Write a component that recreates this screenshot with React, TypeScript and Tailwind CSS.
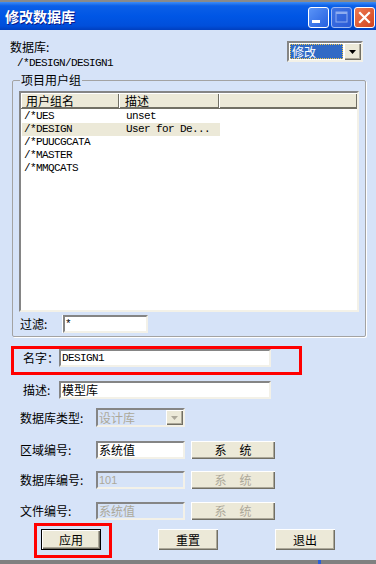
import React from "react";

type Group = { name: string; desc: string; selected?: boolean };

const GROUPS: Group[] = [
  { name: "/*UES", desc: "unset" },
  { name: "/*DESIGN", desc: "User for De...", selected: true },
  { name: "/*PUUCGCATA", desc: "" },
  { name: "/*MASTER", desc: "" },
  { name: "/*MMQCATS", desc: "" },
];

const sunken =
  "border-2 border-t-[#858585] border-l-[#858585] border-b-[#f3f1e8] border-r-[#f3f1e8]";
const raised =
  "bg-[#ece9d8] shadow-[inset_1px_1px_0_#ffffff,inset_-1px_-1px_0_#716f64,inset_-2px_-2px_0_#aca899]";
const mono = "font-['Liberation_Mono',monospace] text-[11px] tracking-[-0.6px]";
const header =
  "h-full bg-[#ece9d8] leading-[15px] shadow-[inset_1px_1px_0_#ffffff,inset_-1px_-1px_0_#716f64]";

function Arrow({ disabled = false }: { disabled?: boolean }) {
  return (
    <div className={`flex w-[17px] shrink-0 items-center justify-center ${raised}`}>
      <svg width="7" height="4" viewBox="0 0 7 4">
        <path d="M0 0h7L3.5 4z" fill={disabled ? "#aca899" : "#000"} />
      </svg>
    </div>
  );
}

function Label({ text, width }: { text: string; width: string }) {
  return <div className={`${width} shrink-0 leading-[18px]`}>{text}</div>;
}

function SysButton({ disabled = false }: { disabled?: boolean }) {
  return (
    <div
      className={`ml-[6px] flex h-[18px] w-[84px] items-center justify-center gap-[13px] leading-none ${raised} ${
        disabled ? "text-[#aca899]" : "text-black"
      }`}
    >
      <span>系</span>
      <span>统</span>
    </div>
  );
}

function TitleButtons() {
  return (
    <div className="mt-[2px] flex gap-[2px]">
      <div className="flex h-[21px] w-[21px] items-end rounded-[3px] border border-white bg-[linear-gradient(135deg,#5a94f7,#2560df)] pb-[4px] pl-[3px]">
        <div className="h-[3px] w-[8px] bg-white" />
      </div>
      <div className="flex h-[21px] w-[21px] items-center justify-center rounded-[3px] border border-[#9db8f2] bg-[linear-gradient(135deg,#3f73e4,#2a5ad6)]">
        <svg width="13" height="12" viewBox="0 0 13 12">
          <rect x="1" y="1" width="11" height="10" fill="none" stroke="#8eacef" strokeWidth="1" />
          <rect x="1" y="1" width="11" height="2" fill="#8eacef" />
        </svg>
      </div>
      <div className="flex h-[21px] w-[21px] items-center justify-center rounded-[3px] border border-white bg-[linear-gradient(135deg,#ee7a52,#d2441f)]">
        <svg width="13" height="13" viewBox="0 0 13 13">
          <path d="M2 2l9 9M11 2l-9 9" stroke="#fff" strokeWidth="2.2" strokeLinecap="square" />
        </svg>
      </div>
    </div>
  );
}

export default function App() {
  return (
    <div className="flex h-[564px] w-[376px] flex-col overflow-hidden bg-[#d6e3f8] font-['Noto_Sans_CJK_SC',sans-serif] text-[12px] text-black">
      <div className="flex h-[30px] shrink-0 items-center justify-between border-t-2 border-[#8a8a8a] bg-[linear-gradient(180deg,#3d8cf6_0%,#0b5fe7_14%,#0056e5_50%,#004fdb_85%,#003fbf_100%)] pl-[5px] pr-[1px]">
        <span className="text-[14px] font-bold leading-none text-white [text-shadow:1px_1px_0_#0a1c8c]">
          修改数据库
        </span>
        <TitleButtons />
      </div>

      <div className="flex flex-1 flex-col">
        <div className="flex justify-between pl-[10px] pr-[13px] pt-[10px]">
          <div className="flex flex-col">
            <span className="leading-[14px]">数据库:</span>
            <span className={`ml-[7px] mt-[2px] leading-[14px] ${mono}`}>/*DESIGN/DESIGN1</span>
          </div>
          <div className={`mt-[1px] flex h-[21px] w-[76px] bg-white ${sunken}`}>
            <div className="flex flex-1 p-[1px]">
              <div className="flex flex-1 items-center border border-dotted border-[#f2c84b] bg-[#316ac5] pl-[1px] leading-none text-white">
                修改
              </div>
            </div>
            <Arrow />
          </div>
        </div>

        <fieldset className="ml-[12px] mt-[3px] w-[354px] rounded-[2px] border border-[#a3a3a3] px-[6px] pb-[3px] shadow-[1px_1px_0_#ffffff]">
          <legend className="ml-[1px] px-[1px] leading-[14px]">项目用户组</legend>
          <div className={`mt-[4px] flex h-[221px] w-[340px] flex-col bg-white ${sunken}`}>
            <div className="flex h-[16px] shrink-0 border-b border-[#716f64]">
              <div className={`w-[98px] pl-[5px] ${header}`}>用户组名</div>
              <div className={`w-[100px] pl-[6px] ${header}`}>描述</div>
              <div className={`flex-1 ${header}`} />
            </div>
            <div className="pt-[1px]">
              {GROUPS.map((g) => (
                <div
                  key={g.name}
                  className={`ml-[1px] flex h-[13px] w-[198px] leading-[13px] ${mono} ${
                    g.selected ? "bg-[#ece9d8]" : ""
                  }`}
                >
                  <span className="w-[104px] pl-[2px]">{g.name}</span>
                  <span>{g.desc}</span>
                </div>
              ))}
            </div>
          </div>
          <div className="mt-[3px] flex items-center">
            <Label text="过滤:" width="w-[43px] pl-[1px]" />
            <div className={`h-[18px] w-[86px] bg-white pl-[1px] leading-[14px] ${mono}`}>
              <div className={`h-full ${sunken}`}>*</div>
            </div>
          </div>
        </fieldset>

        <div className="ml-[11px] mt-[9px] flex h-[29px] w-[291px] items-start border-[3px] border-[#ff0000] pl-[9px]">
          <Label text="名字：" width="w-[36px]" />
          <div className={`h-[18px] w-[212px] bg-white pl-[1px] leading-[14px] ${mono} ${sunken}`}>DESIGN1</div>
        </div>

        <div className="ml-[23px] mt-[6px] flex items-center">
          <Label text="描述:" width="w-[36px]" />
          <div className={`h-[18px] w-[212px] bg-white pl-[1px] leading-[14px] ${sunken}`}>模型库</div>
        </div>

        <div className="ml-[20px] mt-[9px] flex items-center">
          <Label text="数据库类型:" width="w-[76px]" />
          <div className={`flex h-[19px] w-[89px] ${sunken}`}>
            <div className="flex-1 pl-[1px] leading-[15px] text-[#aca899]">设计库</div>
            <Arrow disabled />
          </div>
        </div>

        <div className="ml-[20px] mt-[14px] flex items-center">
          <Label text="区域编号:" width="w-[76px]" />
          <div className={`h-[18px] w-[89px] bg-white pl-[1px] leading-[14px] ${sunken}`}>系统值</div>
          <SysButton />
        </div>

        <div className="ml-[20px] mt-[12px] flex items-center">
          <Label text="数据库编号:" width="w-[76px]" />
          <div
            className={`h-[18px] w-[89px] pl-[1px] font-['Liberation_Sans',sans-serif] text-[11px] leading-[14px] text-[#aca899] ${sunken}`}
          >
            101
          </div>
          <SysButton disabled />
        </div>

        <div className="ml-[20px] mt-[13px] flex items-center">
          <Label text="文件编号:" width="w-[76px]" />
          <div className={`h-[18px] w-[89px] pl-[1px] leading-[14px] text-[#aca899] ${sunken}`}>系统值</div>
          <SysButton disabled />
        </div>

        <div className="mt-[3px] flex items-start">
          <div className="ml-[34px] h-[35px] w-[78px] border-[3px] border-[#ff0000] pl-[4px] pt-[3px]">
            <div className="flex h-[21px] w-[60px] items-center justify-center border border-black bg-[#ece9d8] shadow-[inset_1px_1px_0_#ffffff,inset_-1px_-1px_0_#716f64,inset_-2px_-2px_0_#aca899]">
              应用
            </div>
          </div>
          <div className={`ml-[46px] mt-[6px] flex h-[21px] w-[60px] items-center justify-center ${raised}`}>重置</div>
          <div className={`ml-[57px] mt-[6px] flex h-[21px] w-[60px] items-center justify-center ${raised}`}>退出</div>
        </div>
      </div>

      <div className="flex h-[4px] shrink-0 bg-[#808080]">
        <div className="ml-[318px] h-[4px] w-[3px] bg-[#2a5fd8]" />
      </div>
    </div>
  );
}
